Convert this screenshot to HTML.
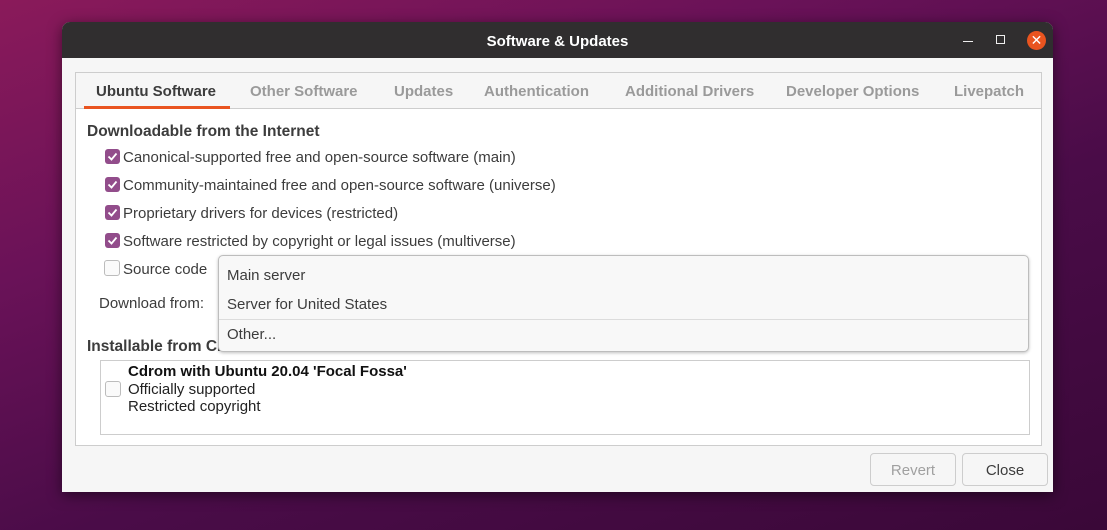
<!DOCTYPE html>
<html><head><meta charset="utf-8"><style>
*{margin:0;padding:0;box-sizing:border-box}
body{width:1107px;height:530px;overflow:hidden;position:relative;font-family:"Liberation Sans","DejaVu Sans",sans-serif;font-size:15px;color:#3c3c3c;
background:linear-gradient(160deg,#8a1a5a 0%,#6a1258 30%,#4a0c48 60%,#3a0838 100%);}
.abs{position:absolute}
.win{left:62px;top:22px;width:991px;height:470px;background:#f6f6f6;border-radius:8px 8px 0 0;overflow:hidden;box-shadow:0 3px 14px rgba(0,0,0,.5)}
.title{left:0;top:0;width:991px;height:36px;background:#302e2f;color:#fff;font-weight:bold;font-size:15px;text-align:center;line-height:40px}
.frame{left:13px;top:50px;width:967px;height:374px;border:1px solid #cdcdcd;background:#fff}
.tabs{left:0;top:0;width:965px;height:36px;background:#f6f6f6;border-bottom:1px solid #cdcdcd}
.tab{top:10px;font-weight:bold;color:#9a9a9a;font-size:15px}
.cb{width:15px;height:15px;border-radius:3px;background:#924d8b;}
.cb svg{display:block}
.ucb{width:16px;height:16px;border-radius:3px;border:1px solid #bcbcbc;background:#fafafa}
.lbl{font-size:15px;color:#3c3c3c}
.btn{height:33px;border:1px solid #cdcdcd;border-radius:4px;background:#f6f6f6;text-align:center;line-height:33px;font-size:15px}
</style></head><body>
<div class="abs win">
 <div class="abs title">Software &amp; Updates</div>
 <div class="abs" style="left:901px;top:19px;width:10px;height:1px;background:#eee"></div>
 <div class="abs" style="left:934px;top:13px;width:9px;height:9px;border:1.5px solid #eee"></div>
 <div class="abs" style="left:965px;top:9px;width:19px;height:19px;border-radius:50%;background:#e9541f;color:#fff;font-size:14px;line-height:19px;text-align:center">✕</div>
 <div class="abs frame">
  <div class="abs tabs">
   <div class="abs tab" style="left:20px;color:#3c3c3c">Ubuntu Software</div>
   <div class="abs" style="left:8px;top:33px;width:146px;height:3px;background:#e95420"></div>
   <div class="abs tab" style="left:174px">Other Software</div>
   <div class="abs tab" style="left:318px">Updates</div>
   <div class="abs tab" style="left:408px">Authentication</div>
   <div class="abs tab" style="left:549px">Additional Drivers</div>
   <div class="abs tab" style="left:710px">Developer Options</div>
   <div class="abs tab" style="left:878px">Livepatch</div>
  </div>
  <div class="abs" style="left:11px;top:50px;font-weight:bold;font-size:15.5px">Downloadable from the Internet</div>
  <div class="abs cb" style="left:29px;top:76px"><svg width="15" height="15"><path d="M3.5 7.5l3 3 5-6" stroke="#fff" stroke-width="1.8" fill="none"/></svg></div>
  <div class="abs lbl" style="left:47px;top:76px">Canonical-supported free and open-source software (main)</div>
  <div class="abs cb" style="left:29px;top:104px"><svg width="15" height="15"><path d="M3.5 7.5l3 3 5-6" stroke="#fff" stroke-width="1.8" fill="none"/></svg></div>
  <div class="abs lbl" style="left:47px;top:104px">Community-maintained free and open-source software (universe)</div>
  <div class="abs cb" style="left:29px;top:132px"><svg width="15" height="15"><path d="M3.5 7.5l3 3 5-6" stroke="#fff" stroke-width="1.8" fill="none"/></svg></div>
  <div class="abs lbl" style="left:47px;top:132px">Proprietary drivers for devices (restricted)</div>
  <div class="abs cb" style="left:29px;top:160px"><svg width="15" height="15"><path d="M3.5 7.5l3 3 5-6" stroke="#fff" stroke-width="1.8" fill="none"/></svg></div>
  <div class="abs lbl" style="left:47px;top:160px">Software restricted by copyright or legal issues (multiverse)</div>
  <div class="abs ucb" style="left:28px;top:187px"></div>
  <div class="abs lbl" style="left:47px;top:188px">Source code</div>
  <div class="abs lbl" style="left:23px;top:222px">Download from:</div>
  <div class="abs" style="left:11px;top:265px;font-weight:bold;font-size:15.5px">Installable from CD-ROM/DVD</div>
  <div class="abs" style="left:24px;top:287px;width:930px;height:75px;border:1px solid #cdcdcd;background:#fff"></div>
  <div class="abs ucb" style="left:29px;top:308px"></div>
  <div class="abs" style="left:52px;top:290px;font-weight:bold;color:#111">Cdrom with Ubuntu 20.04 'Focal Fossa'</div>
  <div class="abs lbl" style="left:52px;top:308px;color:#222">Officially supported</div>
  <div class="abs lbl" style="left:52px;top:325px;color:#222">Restricted copyright</div>
 </div>
 <div class="abs" style="left:156px;top:233px;width:811px;height:97px;background:#f8f8f8;border:1px solid #bdbdbd;border-radius:5px;box-shadow:0 1px 3px rgba(0,0,0,.25)">
  <div class="abs lbl" style="left:8px;top:11px">Main server</div>
  <div class="abs lbl" style="left:8px;top:40px">Server for United States</div>
  <div class="abs" style="left:0;top:63px;width:809px;height:1px;background:#dcdcdc"></div>
  <div class="abs lbl" style="left:8px;top:70px">Other...</div>
 </div>
 <div class="abs btn" style="left:808px;top:431px;width:86px;color:#a0a0a0">Revert</div>
 <div class="abs btn" style="left:900px;top:431px;width:86px;color:#3c3c3c">Close</div>
</div>
</body></html>
